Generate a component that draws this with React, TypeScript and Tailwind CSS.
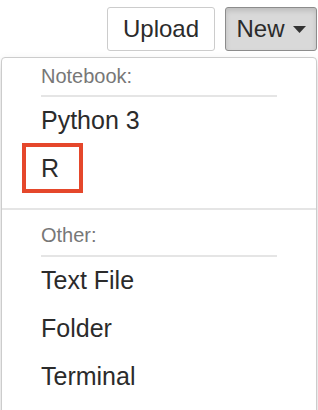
export default function App() {
  return (
    <div className="h-[410px] w-[318px] overflow-hidden bg-white font-['Liberation_Sans',Arial,sans-serif] text-[#2b2b2b]">
      <div className="flex justify-end gap-[10px] pr-[1px] pt-[7px]">
        <button className="flex h-[44px] w-[108px] items-center justify-center rounded-[3px] border border-[#ccc] bg-white text-[24px] text-[#2b2b2b]">
          Upload
        </button>
        <button className="flex h-[44px] w-[92px] items-center justify-center gap-[8px] rounded-[3px] border border-[#8c8c8c] bg-[#d9d9d9] text-[24px] text-[#2b2b2b] shadow-[inset_0_3px_5px_rgba(0,0,0,0.125)]">
          New
          <svg width="13" height="7" viewBox="0 0 13 7">
            <path d="M0 0h13L6.5 7z" fill="#333" />
          </svg>
        </button>
      </div>

      <div className="ml-[1px] mt-[6px] w-[316px] rounded-t-[4px] border border-[#ccc] bg-white pb-[40px] pt-[4px] shadow-[0_6px_12px_rgba(0,0,0,0.175)]">
        <div className="h-[28px] pl-[39px] text-[20px] leading-[28px] text-[#777]">Notebook:</div>
        <div className="ml-[39px] mt-[5px] h-[2px] w-[236px] bg-[#e5e5e5]" />
        <div className="h-[48px] pl-[39px] text-[25px] leading-[46px]">Python 3</div>
        <div className="relative h-[48px] pl-[39px] text-[25px] leading-[46px]">
          R
          <div className="absolute left-[20px] top-[-2px] h-[50px] w-[61px] border-[4px] border-[#e5472b]" />
        </div>

        <div className="mt-[15px] h-[2px] bg-[#e5e5e5]" />

        <div className="mt-[11px] h-[28px] pl-[39px] text-[20px] leading-[28px] text-[#777]">Other:</div>
        <div className="ml-[39px] mt-[6px] h-[2px] w-[236px] bg-[#e5e5e5]" />
        <div className="h-[48px] pl-[39px] text-[25px] leading-[46px]">Text File</div>
        <div className="h-[48px] pl-[39px] text-[25px] leading-[46px]">Folder</div>
        <div className="h-[48px] pl-[39px] text-[25px] leading-[46px]">Terminal</div>
      </div>
    </div>
  );
}
